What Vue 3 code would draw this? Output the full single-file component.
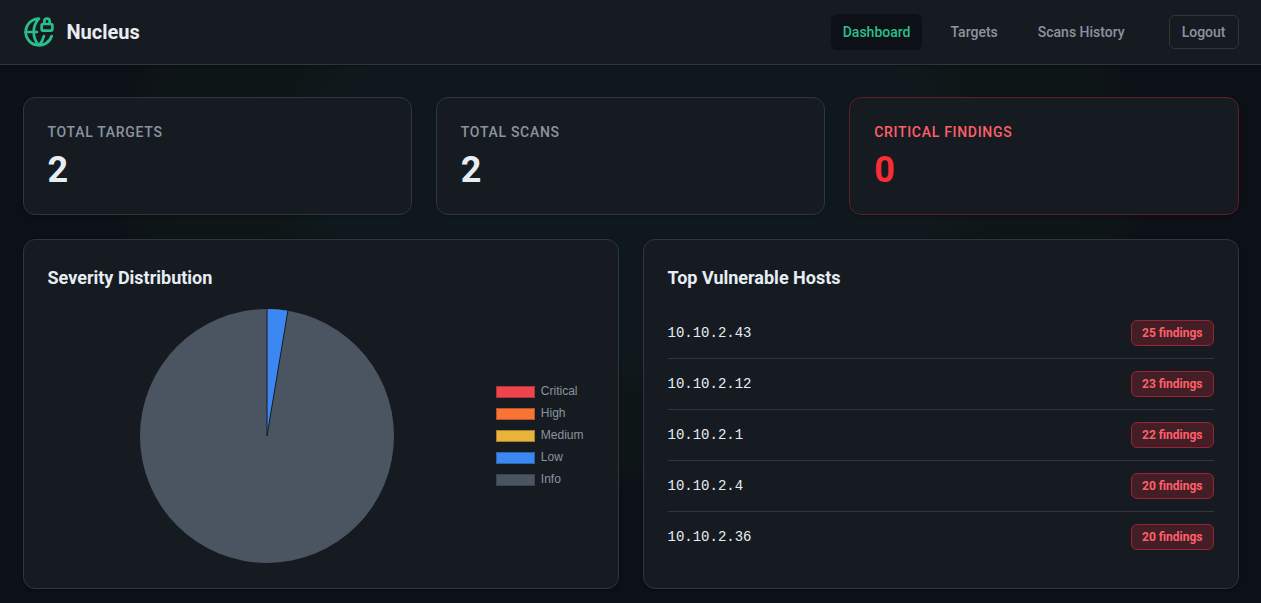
<script setup>
const links = [
  { label: 'Dashboard', active: true },
  { label: 'Targets', active: false },
  { label: 'Scans History', active: false },
]

const stats = [
  { label: 'Total Targets', value: 2 },
  { label: 'Total Scans', value: 2 },
  { label: 'Critical Findings', value: 0, critical: true },
]

const severities = ['Critical', 'High', 'Medium', 'Low', 'Info']

const hosts = [
  { ip: '10.10.2.43', findings: 25 },
  { ip: '10.10.2.12', findings: 23 },
  { ip: '10.10.2.1', findings: 22 },
  { ip: '10.10.2.4', findings: 20 },
  { ip: '10.10.2.36', findings: 20 },
]
</script>

<template>
  <div class="page">
    <header class="topbar">
      <div class="topbar-inner">
        <a href="#" class="brand">
          <svg class="logo" viewBox="0 0 24 24" fill="none" stroke="currentColor" stroke-width="2" stroke-linecap="round" stroke-linejoin="round" aria-hidden="true">
            <path d="M15.686 15A14.5 14.5 0 0 1 12 22a14.5 14.5 0 0 1 0-20 10 10 0 1 0 9.542 13" />
            <path d="M2 12h8.5" />
            <path d="M20 6V4a2 2 0 1 0-4 0v2" />
            <rect width="8" height="5" x="14" y="6" rx="1" />
          </svg>
          <span>Nucleus</span>
        </a>
        <div class="actions">
          <nav class="nav">
            <a v-for="link in links" :key="link.label" href="#" class="nav-link" :class="{ active: link.active }">{{ link.label }}</a>
          </nav>
          <button type="button" class="logout">Logout</button>
        </div>
      </div>
    </header>

    <main class="content">
      <section class="stats">
        <article v-for="stat in stats" :key="stat.label" class="card" :class="{ critical: stat.critical }">
          <h2 class="stat-label">{{ stat.label }}</h2>
          <p class="stat-value">{{ stat.value }}</p>
        </article>
      </section>

      <section class="panels">
        <article class="card">
          <h2 class="panel-title">Severity Distribution</h2>
          <div class="chart">
            <div class="pie-area">
              <svg class="pie" viewBox="-128 -128 256 256" role="img" aria-label="Severity distribution">
                <circle r="127" fill="#4b5561" />
                <path d="M0 0V-127A127 127 0 0 1 21 -125.3Z" fill="#3b88f2" />
                <path d="M0 -128V0L21 -126" fill="none" stroke="#161b22" stroke-width="1" />
              </svg>
            </div>
            <ul class="legend">
              <li v-for="name in severities" :key="name" class="legend-item">
                <span class="swatch" :class="name.toLowerCase()"></span>
                <span class="legend-label">{{ name }}</span>
              </li>
            </ul>
          </div>
        </article>

        <article class="card">
          <h2 class="panel-title">Top Vulnerable Hosts</h2>
          <ul class="hosts">
            <li v-for="host in hosts" :key="host.ip" class="host">
              <span class="ip">{{ host.ip }}</span>
              <span class="badge">{{ host.findings }} findings</span>
            </li>
          </ul>
        </article>
      </section>
    </main>
  </div>
</template>

<style>
body {
  margin: 0;
  background: #0d1117;
}
</style>

<style scoped>
.page {
  min-height: 100vh;
  box-sizing: border-box;
  background: radial-gradient(ellipse 530px 320px at 50% 170px, #0f191d 0%, #0f191d 58%, #0e1617 68%, #0e1517 92%, #0c1017 100%);
  color: #e6edf3;
  font-family: Roboto, sans-serif;
}

.page *,
.page *::before {
  box-sizing: border-box;
}

h2,
p,
ul {
  margin: 0;
  padding: 0;
}

ul {
  list-style: none;
}

.topbar {
  background: #161b22;
  border-bottom: 1px solid #30363d;
  box-shadow: 0 1px 3px rgba(0, 0, 0, 0.3);
}

.topbar-inner {
  display: flex;
  align-items: center;
  justify-content: space-between;
  max-width: 1216px;
  height: 64px;
  margin: 0 auto;
}

.brand {
  display: flex;
  align-items: center;
  gap: 12px;
  color: #e6edf3;
  font-size: 20px;
  font-weight: 700;
  line-height: 28px;
  text-decoration: none;
}

.logo {
  width: 32px;
  height: 32px;
  color: #2abf8a;
}

.actions {
  display: flex;
  align-items: center;
  gap: 32px;
}

.nav {
  display: flex;
  gap: 16px;
}

.nav-link {
  padding: 8px 12px;
  border-radius: 6px;
  color: #8b949e;
  font-size: 14px;
  font-weight: 500;
  line-height: 20px;
  text-decoration: none;
}

.nav-link.active {
  background: #0d1017;
  color: #2abf8a;
}

.logout {
  padding: 6px 12px;
  border: 1px solid #30363d;
  border-radius: 6px;
  background: transparent;
  color: #8b949e;
  font-family: inherit;
  font-size: 14px;
  font-weight: 500;
  line-height: 20px;
}

.content {
  display: grid;
  gap: 24px;
  max-width: 1216px;
  margin: 0 auto;
  padding-top: 32px;
}

.stats {
  display: grid;
  grid-template-columns: repeat(3, 1fr);
  gap: 24px;
}

.panels {
  display: grid;
  grid-template-columns: repeat(2, 1fr);
  gap: 24px;
}

.card {
  padding: 24px;
  border: 1px solid #30363d;
  border-radius: 12px;
  background: #161b22;
  box-shadow: 0 1px 3px rgba(0, 0, 0, 0.3);
}

.card.critical {
  border-color: #611d29;
}

.stat-label {
  margin-bottom: 8px;
  color: #8b949e;
  font-size: 14px;
  font-weight: 500;
  line-height: 20px;
  letter-spacing: 0.05em;
  text-transform: uppercase;
}

.stat-value {
  font-size: 36px;
  font-weight: 700;
  line-height: 40px;
}

.critical .stat-label {
  color: #ff5f67;
}

.critical .stat-value {
  color: #fb2c36;
}

.panel-title {
  margin-bottom: 16px;
  font-size: 18px;
  font-weight: 700;
  line-height: 28px;
}

.chart {
  display: flex;
  align-items: center;
  height: 256px;
}

.pie-area {
  display: flex;
  flex: 1;
  justify-content: center;
}

.pie {
  width: 256px;
  height: 256px;
}

.legend {
  display: grid;
  gap: 6px;
  padding-right: 10px;
  padding-left: 9px;
  color: #8b949e;
  font-family: "Liberation Sans", Arial, sans-serif;
  font-size: 12px;
}

.legend-item {
  display: flex;
  align-items: center;
  gap: 6px;
}

.legend-label {
  padding-bottom: 2px;
  line-height: 14px;
}

.swatch {
  width: 39px;
  height: 12px;
  border: 1px solid;
}

.swatch.critical {
  border-color: #a9373f;
  background: #ef444c;
}

.swatch.high {
  border-color: #b0552d;
  background: #f97432;
}

.swatch.medium {
  border-color: #a57f30;
  background: #e8b339;
}

.swatch.low {
  border-color: #2f63a9;
  background: #3b88f2;
}

.swatch.info {
  border-color: #3a424c;
  background: #4b5561;
}

.host {
  display: flex;
  align-items: center;
  justify-content: space-between;
  padding: 12px 0;
  border-bottom: 1px solid #30363d;
}

.host:last-child {
  border-bottom: 0;
}

.ip {
  font-family: "Liberation Mono", monospace;
  font-size: 14px;
  line-height: 20px;
}

.badge {
  padding: 4px 10px;
  border: 1px solid #9a2232;
  border-radius: 6px;
  background: #441e27;
  color: #ff6067;
  font-size: 12px;
  font-weight: 700;
  line-height: 16px;
}
</style>
